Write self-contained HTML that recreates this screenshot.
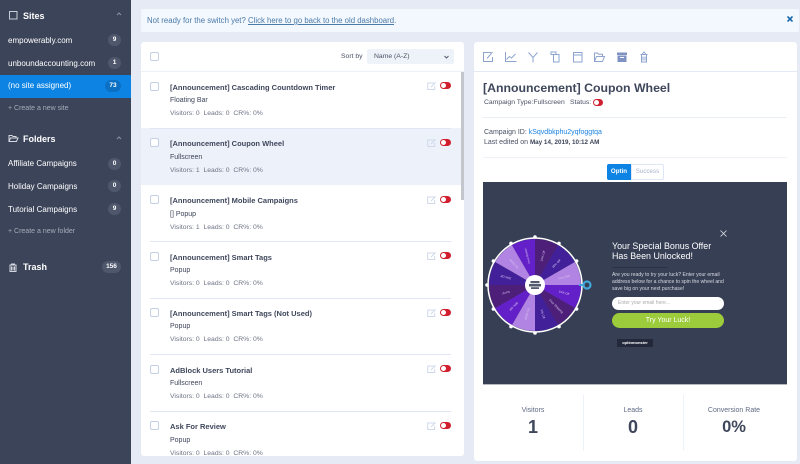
<!DOCTYPE html>
<html><head><meta charset="utf-8">
<style>
html,body{margin:0;padding:0}
body{width:800px;height:464px;overflow:hidden;background:#e6eaf5;font-family:"Liberation Sans",sans-serif;position:relative;color:#3c4459}
.a{position:absolute;white-space:nowrap}
.side{left:0;top:0;width:131px;height:464px;background:#3c4459}
.h{font-weight:bold;color:#fff;font-size:9px;left:23px}
.s{color:#fff;font-size:8px;left:8px;line-height:10px}
.b{background:#4f576c;color:#fff;font-size:6.5px;font-weight:bold;text-align:center;border-radius:7px;height:12px;line-height:12px;width:13px;left:108px}
.c{color:#a5abb9;font-size:7px;left:8px}
.p{background:#fff;border-radius:3px}
.cb{width:7px;height:7px;border:1px solid #c5d0e4;border-radius:2px;background:#fff;left:150px}
.t{left:170px;font-size:7.5px;font-weight:bold;color:#3f475c;line-height:10px;margin-top:1px}
.y{left:170px;font-size:7px;color:#3c4459;line-height:9px;margin-top:1px}
.m{left:170px;font-size:6.8px;color:#6d7383;line-height:9px;margin-top:1px}
.sep{left:150px;width:301px;height:1px;background:#dfe7f5}
.tg{left:440px;width:11px;height:7px;background:#d0202f;border-radius:4px}
.tg:before{content:"";position:absolute;left:1px;top:1px;width:5px;height:5px;border-radius:50%;background:#fff}
.ed{left:427px}
svg{display:block}
.ico{fill:none;stroke:#8ea4cf;stroke-width:1}
</style></head><body>
<div class="a side"></div>
<svg class="a" style="left:9px;top:11px" width="9" height="9"><rect x=".5" y=".5" width="7.500" height="7.500" fill="none" stroke="#c8ccd6"/></svg>
<div class="a h" style="top:11px">Sites</div>
<svg class="a" style="left:116px;top:12px" width="6" height="4"><path d="M1 3l2-2 2 2" fill="none" stroke="#8b92a3"/></svg>
<div class="a s" style="top:36px">empowerably.com</div><div class="a b" style="top:34px">9</div>
<div class="a s" style="top:59px">unboundaccounting.com</div><div class="a b" style="top:57px">1</div>
<div class="a" style="left:0;top:75px;width:131px;height:23px;background:#0d84e3"></div>
<div class="a s" style="top:81px">(no site assigned)</div><div class="a b" style="top:80px;background:#0b70c4;left:105px;width:16px">73</div>
<div class="a c" style="top:105px">+ Create a new site</div>

<svg class="a" style="left:8px;top:134px" width="11" height="9"><path d="M1 7.500V1.500h3l1 1h3v1.500M1 7.500l1.500-3.500h7.500l-1.500 3.500z" fill="none" stroke="#d5d8e0"/></svg>
<div class="a h" style="top:134px">Folders</div>
<svg class="a" style="left:116px;top:136px" width="6" height="4"><path d="M1 3l2-2 2 2" fill="none" stroke="#8b92a3"/></svg>
<div class="a s" style="top:159px">Affiliate Campaigns</div><div class="a b" style="top:158px">0</div>
<div class="a s" style="top:182px">Holiday Campaigns</div><div class="a b" style="top:180px">0</div>
<div class="a s" style="top:205px">Tutorial Campaigns</div><div class="a b" style="top:203px">9</div>
<div class="a c" style="top:228px">+ Create a new folder</div>
<svg class="a" style="left:9px;top:263px" width="8" height="9"><path d="M1 2h6v6.500H1zM2.500 2V1h3v1M2.500 3.500v4M4 3.500v4M5.500 3.500v4" fill="none" stroke="#d5d8e0"/></svg>
<div class="a h" style="top:262px">Trash</div><div class="a b" style="top:261px;left:102px;width:19px">156</div>

<div class="a" style="left:141px;top:9px;width:658px;height:23px;background:#f3f7fe;border-radius:2px"></div>
<div class="a" style="left:147px;top:15px;font-size:7.8px;line-height:11px;color:#4a7ba8">Not ready for the switch yet? <span style="text-decoration:underline">Click here to go back to the old dashboard</span>.</div>
<svg class="a" style="left:787px;top:16px" width="6" height="6"><path d="M.5.500l5 5M5.500.500l-5 5" stroke="#1668ad" stroke-width="1.600"/></svg>

<div class="a p" style="left:141px;top:42px;width:323px;height:414px;overflow:hidden"></div>
<div class="a cb" style="top:52px"></div>
<div class="a" style="left:341px;top:52px;font-size:6.800px;line-height:9px;color:#4a5164">Sort by</div>
<div class="a" style="left:367px;top:49px;width:87px;height:15px;background:#eef2f9;border-radius:2px;font-size:6.800px;line-height:15px;color:#4a5164;text-indent:7px">Name (A-Z)</div>
<svg class="a" style="left:444px;top:55px" width="5" height="4"><path d="M.5 1l2 2 2-2" fill="none" stroke="#555c70"/></svg>
<div class="a" style="left:141px;top:71px;width:323px;height:1px;background:#edf1f8"></div>
<div class="a" style="left:141px;top:128px;width:320px;height:57px;background:#edf1f9"></div>
<div class="a" style="left:461px;top:72px;width:3px;height:128px;background:#c3c6cd"></div>

<div class="a cb" style="top:82px"></div><div class="a t" style="top:82px">[Announcement] Cascading Countdown Timer</div><div class="a y" style="top:95px">Floating Bar</div><div class="a m" style="top:108px">Visitors: 0 &nbsp;Leads: 0 &nbsp;CR%: 0%</div>
<div class="a sep" style="top:128px"></div>
<div class="a cb" style="top:138px"></div><div class="a t" style="top:138px">[Announcement] Coupon Wheel</div><div class="a y" style="top:152px">Fullscreen</div><div class="a m" style="top:165px">Visitors: 1 &nbsp;Leads: 0 &nbsp;CR%: 0%</div>
<div class="a cb" style="top:195px"></div><div class="a t" style="top:195px">[Announcement] Mobile Campaigns</div><div class="a y" style="top:209px">[] Popup</div><div class="a m" style="top:222px">Visitors: 1 &nbsp;Leads: 0 &nbsp;CR%: 0%</div>
<div class="a sep" style="top:241px"></div>
<div class="a cb" style="top:252px"></div><div class="a t" style="top:252px">[Announcement] Smart Tags</div><div class="a y" style="top:265px">Popup</div><div class="a m" style="top:278px">Visitors: 0 &nbsp;Leads: 0 &nbsp;CR%: 0%</div>
<div class="a sep" style="top:298px"></div>
<div class="a cb" style="top:308px"></div><div class="a t" style="top:308px">[Announcement] Smart Tags (Not Used)</div><div class="a y" style="top:321px">Popup</div><div class="a m" style="top:334px">Visitors: 0 &nbsp;Leads: 0 &nbsp;CR%: 0%</div>
<div class="a sep" style="top:354px"></div>
<div class="a cb" style="top:365px"></div><div class="a t" style="top:365px">AdBlock Users Tutorial</div><div class="a y" style="top:378px">Fullscreen</div><div class="a m" style="top:391px">Visitors: 0 &nbsp;Leads: 0 &nbsp;CR%: 0%</div>
<div class="a sep" style="top:411px"></div>
<div class="a cb" style="top:421px"></div><div class="a t" style="top:421px">Ask For Review</div><div class="a y" style="top:435px">Popup</div>
<div class="a" style="left:170px;top:449px;height:7px;overflow:hidden"><div class="m" style="white-space:nowrap;margin:0">Visitors: 0 &nbsp;Leads: 0 &nbsp;CR%: 0%</div></div>

<svg class="a ed" style="top:82px" width="10" height="8"><path d="M7.500 1H.700v6.500h7V4M4 5l4.500-4.500" fill="none" stroke="#cfd9ec"/></svg><div class="a tg" style="top:82px"></div>
<svg class="a ed" style="top:139px" width="10" height="8"><path d="M7.500 1H.700v6.500h7V4M4 5l4.500-4.500" fill="none" stroke="#cfd9ec"/></svg><div class="a tg" style="top:139px"></div>
<svg class="a ed" style="top:196px" width="10" height="8"><path d="M7.500 1H.700v6.500h7V4M4 5l4.500-4.500" fill="none" stroke="#cfd9ec"/></svg><div class="a tg" style="top:196px"></div>
<svg class="a ed" style="top:252px" width="10" height="8"><path d="M7.500 1H.700v6.500h7V4M4 5l4.500-4.500" fill="none" stroke="#cfd9ec"/></svg><div class="a tg" style="top:252px"></div>
<svg class="a ed" style="top:309px" width="10" height="8"><path d="M7.500 1H.700v6.500h7V4M4 5l4.500-4.500" fill="none" stroke="#cfd9ec"/></svg><div class="a tg" style="top:309px"></div>
<svg class="a ed" style="top:365px" width="10" height="8"><path d="M7.500 1H.700v6.500h7V4M4 5l4.500-4.500" fill="none" stroke="#cfd9ec"/></svg><div class="a tg" style="top:365px"></div>
<svg class="a ed" style="top:422px" width="10" height="8"><path d="M7.500 1H.700v6.500h7V4M4 5l4.500-4.500" fill="none" stroke="#cfd9ec"/></svg><div class="a tg" style="top:422px"></div>

<div class="a p" style="left:474px;top:42px;width:323px;height:419px"></div>
<div class="a" style="left:474px;top:71px;width:323px;height:1px;background:#e4eaf5"></div>
<svg class="a" style="left:482px;top:50px" width="170" height="14">
<g class="ico">
<path d="M9 2.500H1.500v9h9V7M5 8.500l5.500-6.500"/>
<path d="M23.500 2v9.500H34.500M24.500 9.500l3-3 2 1.500 4-4"/>
<path d="M46.500 2.500l4.500 5 4.500-5M51 7.500v5"/>
<path d="M71.500 4.500h-2.500v-2.500h5v2.500M71.500 4.500h5.500v7.500h-5.500z"/>
<path d="M91.500 2.500h8.500v9.500h-8.500zM91.500 5h8.500"/>
<path d="M112.500 11.500V3h3l1 1.200h4V6M112.500 11.500l2-5h8l-2 5z"/>
</g>
<path d="M135 2.500h10v2.500h-10zM135.500 5.500h9v6.500h-9z" fill="#7e93c2"/><path d="M138 7.500h4" stroke="#fff"/>
<path class="ico" d="M159.500 4.500v7.500h5v-7.500M158.500 4.500h7M160 4.500l2-2.500 2 2.500M161 6.500v4M163 6.500v4"/>
</svg>

<div class="a" style="left:483px;top:80px;font-size:12.3px;font-weight:bold;line-height:17px;color:#3f475c">[Announcement] Coupon Wheel</div>
<div class="a" style="left:484px;top:98px;font-size:6.800px;line-height:9px;color:#4a5164">Campaign Type:Fullscreen</div>
<div class="a" style="left:570px;top:98px;font-size:6.800px;line-height:9px;color:#4a5164">Status:</div>
<div class="a tg" style="left:593px;top:99px;width:10px"></div>
<div class="a" style="left:483px;top:117px;width:304px;height:1px;background:#e8edf6"></div>
<div class="a" style="left:484px;top:128px;font-size:7px;line-height:9px;color:#4a5164">Campaign ID: <span style="color:#1b82e0">kSqvdbkphu2yqfoggtqa</span></div>
<div class="a" style="left:484px;top:138px;font-size:7px;line-height:9px;color:#4a5164">Last edited on <span style="color:#3c4459;font-weight:bold;font-size:6.300px">May 14, 2019, 10:12 AM</span></div>
<div class="a" style="left:483px;top:157px;width:304px;height:1px;background:#eef1f8"></div>
<div class="a" style="left:607px;top:164px;width:24px;height:16px;background:#0d84e3;border-radius:2px 0 0 2px;color:#fff;font-size:6.200px;font-weight:bold;line-height:16px;text-align:center">Optin</div>
<div class="a" style="left:631px;top:164px;width:31px;height:14px;border:1px solid #dfe6f5;border-radius:0 2px 2px 0;color:#a8b3d0;font-size:6.200px;line-height:14px;text-align:center">Success</div>

<div class="a" style="left:483px;top:182px;width:304px;height:202px;background:#373f55;overflow:hidden"></div>
<svg class="a" style="left:483px;top:232px" width="112" height="106" viewBox="-52 -53 112 106">
<path d="M0 0L0-46A46 46 0 0 1 23-39.840Z" fill="#4d1f78"/>
<path d="M0 0L23-39.840A46 46 0 0 1 39.840-23Z" fill="#41209a"/>
<path d="M0 0L39.840-23A46 46 0 0 1 46 0Z" fill="#b183e3"/>
<path d="M0 0L46 0A46 46 0 0 1 39.840 23Z" fill="#6420c8"/>
<path d="M0 0L39.840 23A46 46 0 0 1 23 39.840Z" fill="#4d1f78"/>
<path d="M0 0L23 39.840A46 46 0 0 1 0 46Z" fill="#41209a"/>
<path d="M0 0L0 46A46 46 0 0 1-23 39.840Z" fill="#b183e3"/>
<path d="M0 0L-23 39.840A46 46 0 0 1-39.840 23Z" fill="#6420c8"/>
<path d="M0 0L-39.840 23A46 46 0 0 1-46 0Z" fill="#4d1f78"/>
<path d="M0 0L-46 0A46 46 0 0 1-39.840-23Z" fill="#41209a"/>
<path d="M0 0L-39.840-23A46 46 0 0 1-23-39.840Z" fill="#b183e3"/>
<path d="M0 0L-23-39.840A46 46 0 0 1 0-46Z" fill="#6420c8"/>
<circle r="47" fill="none" stroke="#fff" stroke-width="1.500"/>
<g fill="#fff"><circle cy="-48" r="1.800"/><circle cx="24" cy="-41.600" r="1.800"/><circle cx="41.600" cy="-24" r="1.800"/><circle cx="41.600" cy="24" r="1.800"/><circle cx="24" cy="41.600" r="1.800"/><circle cy="48" r="1.800"/><circle cx="-24" cy="41.600" r="1.800"/><circle cx="-41.600" cy="24" r="1.800"/><circle cx="-48" r="1.800"/><circle cx="-41.600" cy="-24" r="1.800"/><circle cx="-24" cy="-41.600" r="1.800"/></g>
<g fill="#d9c8f0" font-size="3" text-anchor="middle" font-family="Liberation Sans">
<text transform="rotate(-75) translate(30 1)">10% Off</text>
<text transform="rotate(-45) translate(30 1)">25% Off</text>
<text transform="rotate(-15) translate(30 1)">Free Gift</text>
<text transform="rotate(15) translate(30 1)">15% Off</text>
<text transform="rotate(45) translate(30 1)">Free Shipping</text>
<text transform="rotate(75) translate(30 1)">5% Off</text>
<text transform="rotate(105) translate(30 1)">Try Again</text>
<text transform="rotate(135) translate(30 1)">50% Off</text>
<text transform="rotate(165) translate(30 1)">Sorry!</text>
<text transform="rotate(195) translate(30 1)">30% Off</text>
<text transform="rotate(225) translate(30 1)">So Close</text>
<text transform="rotate(255) translate(30 1)">Free Bonus</text>
</g>
<circle r="10" fill="#fff"/>
<g fill="#555b6e"><rect x="-4.500" y="-4" width="9" height="2.200"/><rect x="-6" y="-1" width="12" height="2.500"/><rect x="-4" y="2.200" width="8" height="1.800"/></g>
<circle cx="52" cy="0" r="3.500" fill="#373f55" stroke="#41a6d8" stroke-width="2.200"/>
<path d="M44 0h4.500" stroke="#41a6d8" stroke-width="2"/>
</svg>
<svg class="a" style="left:720px;top:230px" width="7" height="7"><path d="M.5.500l6 6M6.500.500l-6 6" stroke="#dfe2e8" stroke-width=".8"/></svg>
<div class="a" style="left:612px;top:241px;font-size:8.900px;line-height:10px;color:#fff">Your Special Bonus Offer<br>Has Been Unlocked!</div>
<div class="a" style="left:612px;top:267px;width:56px;height:1px;background:#2a3145"></div>
<div class="a" style="left:612px;top:272px;font-size:5.100px;line-height:7.200px;color:#d8dbe2">Are you ready to try your luck? Enter your email<br>address below for a chance to spin the wheel and<br>save big on your next purchase!</div>
<div class="a" style="left:612px;top:297px;width:112px;height:13px;background:#fff;border-radius:7px;font-size:5px;line-height:13px;color:#aaa;text-indent:6px">Enter your email here...</div>
<div class="a" style="left:612px;top:313px;width:112px;height:15px;background:#9ccb3b;border-radius:8px;font-size:7px;line-height:15px;color:#fff;text-align:center">Try Your Luck!</div>
<div class="a" style="left:617px;top:339px;width:36px;height:8px;background:#23293a;font-size:4px;line-height:8px;color:#fff;text-align:center;font-weight:bold">optinmonster</div>

<div class="a" style="left:483px;top:384px;width:304px;height:1px;background:#b5b9c2"></div>
<div class="a" style="left:583px;top:395px;width:1px;height:56px;background:#edf1f8"></div>
<div class="a" style="left:683px;top:395px;width:1px;height:56px;background:#edf1f8"></div>
<div class="a" style="left:483px;top:406px;width:100px;text-align:center;font-size:7px;line-height:9px;color:#5f6a85">Visitors</div>
<div class="a" style="left:583px;top:406px;width:100px;text-align:center;font-size:7px;line-height:9px;color:#5f6a85">Leads</div>
<div class="a" style="left:684px;top:406px;width:100px;text-align:center;font-size:7px;line-height:9px;color:#5f6a85">Conversion Rate</div>
<div class="a" style="left:483px;top:417px;width:100px;text-align:center;font-size:18px;font-weight:bold;line-height:20px;color:#3f475c">1</div>
<div class="a" style="left:583px;top:417px;width:100px;text-align:center;font-size:18px;font-weight:bold;line-height:20px;color:#3f475c">0</div>
<div class="a" style="left:684px;top:417px;width:100px;text-align:center;font-size:16.500px;font-weight:bold;line-height:20px;color:#3f475c">0%</div>
</body></html>
